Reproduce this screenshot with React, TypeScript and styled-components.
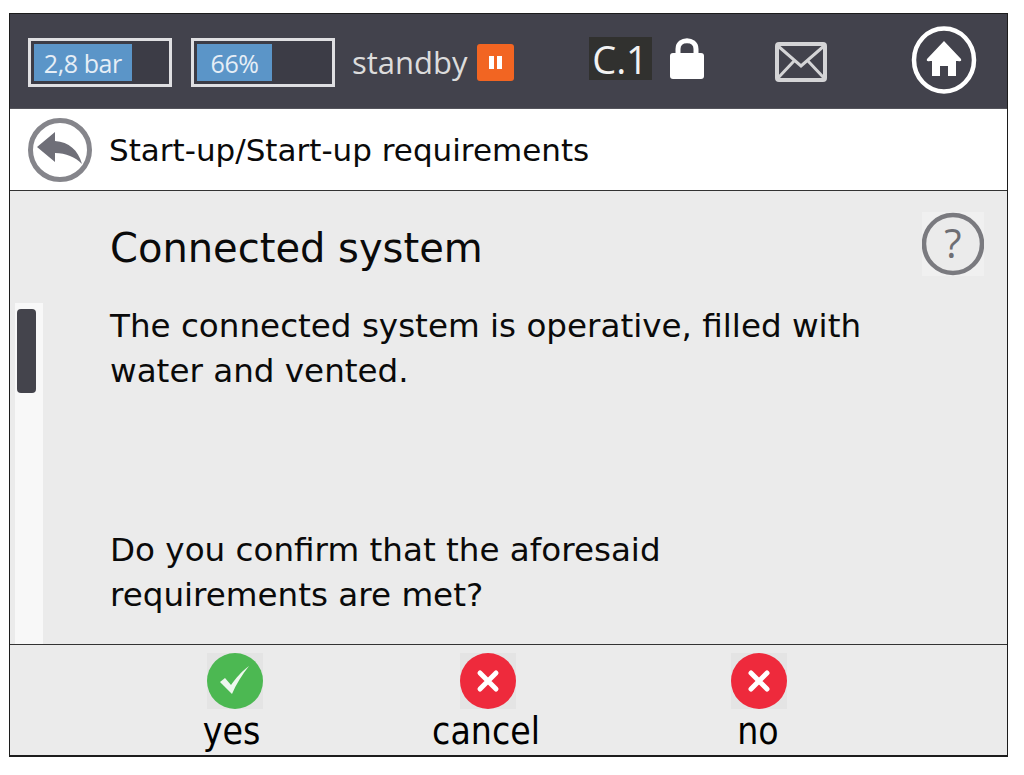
import React from 'react';
import styled, { createGlobalStyle } from 'styled-components';

const GlobalStyle = createGlobalStyle`
  html, body {
    margin: 0;
    padding: 0;
    background: #fff;
  }
`;

const Page = styled.div`
  padding: 13px 0 0 9px;
`;

const Frame = styled.div`
  width: 999px;
  height: 744px;
  box-sizing: border-box;
  border: 1.5px solid #1c1c1c;
  border-bottom-width: 2px;
  display: flex;
  flex-direction: column;
  font-family: 'DejaVu Sans', sans-serif;
  color: #0a0a0a;
`;

const Header = styled.header`
  height: 94px;
  flex: none;
  background: #42424c;
  display: flex;
  align-items: center;
  padding-left: 18px;
`;

const Gauge = styled.div<{ $mr: number }>`
  width: 144px;
  height: 49px;
  box-sizing: border-box;
  border: 3px solid #dfdfe2;
  padding: 3px;
  margin-right: ${p => p.$mr}px;
  margin-top: 3px;
  background: #3c3c46;
`;

const GaugeFill = styled.div`
  height: 100%;
  background: #5b95c8;
  color: #e6eef6;
  font-family: 'Open Sans', sans-serif;
  font-size: 25px;
  letter-spacing: -0.4px;
  display: flex;
  align-items: center;
  justify-content: center;
`;

const Status = styled.span`
  font-family: 'Open Sans', sans-serif;
  font-size: 31px;
  color: #dcdcdc;
  margin-right: 9px;
  margin-top: 2px;
`;

const PauseBadge = styled.div`
  width: 37px;
  height: 37px;
  background: #f26522;
  border-radius: 3px;
  display: flex;
  align-items: center;
  justify-content: center;
  gap: 3px;
  margin-right: 75px;
  margin-top: 3px;
`;

const PauseBar = styled.i`
  width: 5px;
  height: 13px;
  background: #fff;
`;

const Chip = styled.div`
  width: 63px;
  height: 43px;
  background: #31312f;
  color: #f2f2f2;
  font-family: 'Open Sans', sans-serif;
  font-size: 38px;
  line-height: 45px;
  text-align: center;
  margin-right: 18px;
  margin-top: -6px;
`;

const HeaderIcon = styled.svg<{ $ml?: number; $mt?: number }>`
  display: block;
  flex: none;
  margin-left: ${p => p.$ml ?? 0}px;
  margin-top: ${p => p.$mt ?? 0}px;
`;

const Crumbs = styled.div`
  height: 81px;
  flex: none;
  background: #fff;
  border-top: 1px solid #55555c;
  border-bottom: 1.5px solid #333;
  display: flex;
  align-items: center;
  padding-left: 17px;
  gap: 16px;
  font-size: 31px;
`;

const CrumbText = styled.span`
  margin-top: 1px;
`;

const Body = styled.main`
  flex: 1;
  min-height: 0;
  background: #ebebeb;
  display: flex;
  border-bottom: 1.5px solid #333;
`;

const ScrollTrack = styled.div`
  width: 28px;
  flex: none;
  margin: 112px 0 0 5px;
  background: #f8f8f8;
  box-sizing: border-box;
  padding: 6px 0 0 2px;
`;

const ScrollThumb = styled.div`
  width: 19px;
  height: 84px;
  border-radius: 4px;
  background: #44444c;
`;

const Content = styled.div`
  flex: 1;
  padding-left: 67px;
`;

const TitleRow = styled.div`
  display: flex;
  justify-content: space-between;
  padding-right: 23px;
  height: 113px;
`;

const Title = styled.h1`
  margin: 32px 0 0;
  font-weight: 400;
  font-size: 40px;
  line-height: 50px;
`;

const HelpIcon = styled.svg`
  display: block;
  margin-top: 21px;
  background: #f0f0f0;
`;

const Para = styled.p<{ $mb?: number }>`
  margin: 0 0 ${p => p.$mb ?? 0}px;
  font-size: 32.6px;
  line-height: 45px;
`;

const Footer = styled.footer`
  height: 110px;
  flex: none;
  background: #ebebeb;
  display: grid;
  grid-template-columns: 220px 284px 260px;
  padding-left: 114px;
`;

const Action = styled.button`
  all: unset;
  display: flex;
  flex-direction: column;
  align-items: center;
  padding-top: 8px;
  font-family: 'DejaVu Sans', sans-serif;
  font-stretch: condensed;
  font-size: 37px;
  line-height: 44px;
  color: #000;
`;

const ActionLabel = styled.span<{ $mr?: number }>`
  margin-right: ${p => p.$mr ?? 0}px;
`;

const ActionCircle = styled.svg<{ $ml?: number }>`
  display: block;
  background: #e4e4e4;
  margin: 0 0 1px ${p => p.$ml ?? 0}px;
`;

const BackIcon = () => (
  <HeaderIcon width="66" height="66" viewBox="0 0 66 66">
    <circle cx="33" cy="33" r="29.5" fill="#fff" stroke="#85858b" strokeWidth="5" />
    <path
      d="M10 30 L28 15 L28 24 C42 25 51 33 55 47 C48 40 39 36 28 36 L28 45 Z"
      fill="#6f6f78"
    />
  </HeaderIcon>
);

const LockIcon = () => (
  <HeaderIcon width="34" height="42" viewBox="0 0 34 42" $mt={-6}>
    <path d="M8 19 V12 C8 1 26 1 26 12 V19" fill="none" stroke="#fff" strokeWidth="5" />
    <rect x="0" y="16" width="34" height="26" rx="3" fill="#fff" />
  </HeaderIcon>
);

const MailIcon = () => (
  <HeaderIcon width="52" height="40" viewBox="0 0 52 40" $ml={71} $mt={2}>
    <rect x="2" y="2" width="48" height="36" rx="2" fill="none" stroke="#d4d4d6" strokeWidth="4" />
    <path d="M3 4 L26 24 L49 4 M3 36 L19 19 M49 36 L33 19" fill="none" stroke="#d4d4d6" strokeWidth="3" />
  </HeaderIcon>
);

const HomeIcon = () => (
  <HeaderIcon width="66" height="68" viewBox="0 0 66 68" $ml={84} $mt={-3}>
    <ellipse cx="33" cy="34" rx="30" ry="31.5" fill="none" stroke="#fff" strokeWidth="4.5" />
    <path
      d="M33 15 L50 33 Q51 36 47 35 L45 35 L45 50 L37 50 L37 40 L29 40 L29 50 L21 50 L21 35 L19 35 Q15 36 16 33 Z"
      fill="#fff"
    />
  </HeaderIcon>
);

const HelpCircle = () => (
  <HelpIcon width="62" height="64" viewBox="0 0 62 64">
    <circle cx="31" cy="32" r="29" fill="#ebebeb" stroke="#7a7a7f" strokeWidth="4.5" />
    <text x="31" y="46" textAnchor="middle" fontSize="40" fontFamily="'Open Sans', sans-serif" fill="#6e6e73">
      ?
    </text>
  </HelpIcon>
);

const CheckCircle = ({ ml }: { ml?: number }) => (
  <ActionCircle width="56" height="56" viewBox="0 0 56 56" $ml={ml}>
    <circle cx="28" cy="28" r="28" fill="#4cb852" />
    <path d="M13 29 L18 25 L24 32 C29 25 34 19 42 13 C35 22 29 31 25 41 Z" fill="#eef7ee" />
  </ActionCircle>
);

const CrossCircle = ({ ml }: { ml?: number }) => (
  <ActionCircle width="56" height="56" viewBox="0 0 56 56" $ml={ml}>
    <circle cx="28" cy="28" r="28" fill="#ee2a3c" />
    <path d="M20 20 L36 36 M36 20 L20 36" stroke="#fff" strokeWidth="5" strokeLinecap="round" />
  </ActionCircle>
);

export default function App() {
  return (
    <Page>
      <GlobalStyle />
      <Frame>
        <Header>
          <Gauge $mr={19}>
            <GaugeFill style={{ width: '74%' }}>2,8 bar</GaugeFill>
          </Gauge>
          <Gauge $mr={17}>
            <GaugeFill style={{ width: '57%' }}>66%</GaugeFill>
          </Gauge>
          <Status>standby</Status>
          <PauseBadge>
            <PauseBar />
            <PauseBar />
          </PauseBadge>
          <Chip>C.1</Chip>
          <LockIcon />
          <MailIcon />
          <HomeIcon />
        </Header>
        <Crumbs>
          <BackIcon />
          <CrumbText>Start-up/Start-up requirements</CrumbText>
        </Crumbs>
        <Body>
          <ScrollTrack>
            <ScrollThumb />
          </ScrollTrack>
          <Content>
            <TitleRow>
              <Title>Connected system</Title>
              <HelpCircle />
            </TitleRow>
            <Para $mb={134}>
              The connected system is operative, filled with
              <br />
              water and vented.
            </Para>
            <Para>
              Do you confirm that the aforesaid
              <br />
              requirements are met?
            </Para>
          </Content>
        </Body>
        <Footer>
          <Action>
            <CheckCircle ml={2} />
            <ActionLabel $mr={5}>yes</ActionLabel>
          </Action>
          <Action>
            <CrossCircle ml={3} />
            <ActionLabel>cancel</ActionLabel>
          </Action>
          <Action>
            <CrossCircle ml={1} />
            <ActionLabel>no</ActionLabel>
          </Action>
        </Footer>
      </Frame>
    </Page>
  );
}
